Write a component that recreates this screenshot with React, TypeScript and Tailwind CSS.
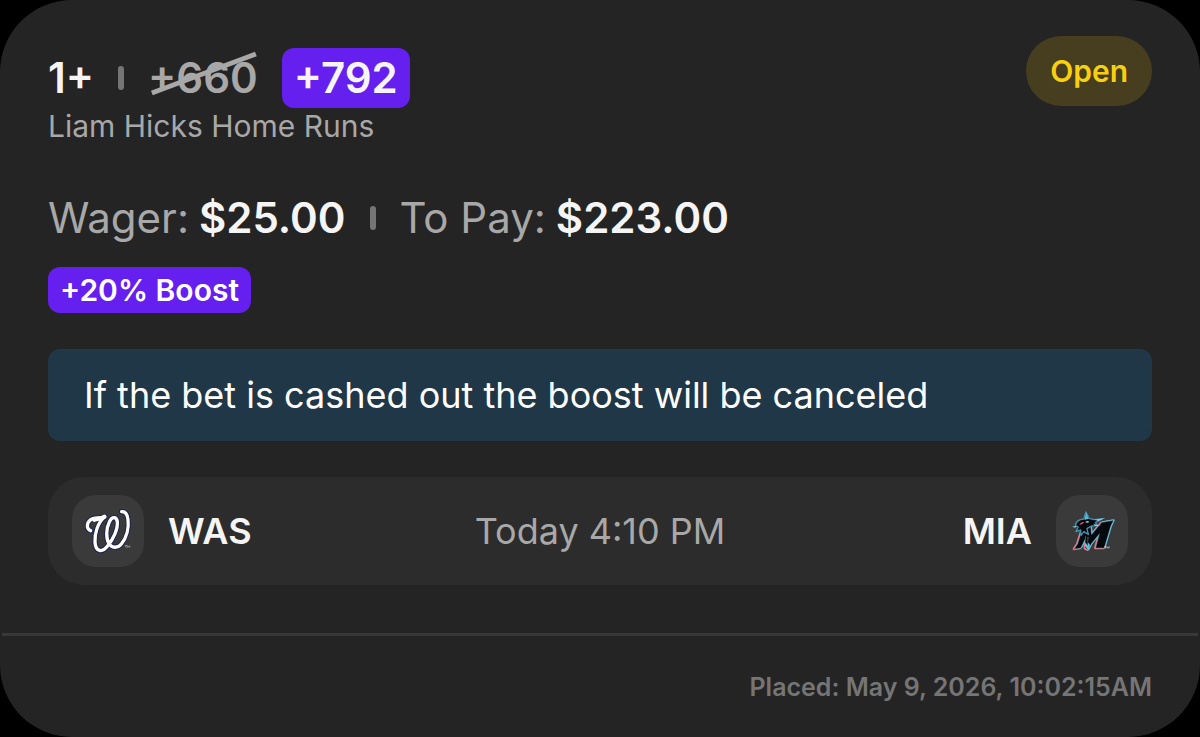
import type { ReactNode } from 'react'

function Separator() {
  return <span className="h-6 w-1.5 rounded-sm bg-[#757575]" />
}

function Amount({ label, value }: { label: string; value: string }) {
  return (
    <div className="flex gap-2.5">
      <span>{label}</span>
      <strong className="font-semibold text-[#f5f5f5]">{value}</strong>
    </div>
  )
}

function LogoTile({ children }: { children: ReactNode }) {
  return (
    <span className="flex size-18 shrink-0 items-center justify-center rounded-3xl bg-[#3a3a3a]">
      {children}
    </span>
  )
}

const NATIONALS_W =
  'M92 137 C77 131 79 108 99 101 C112 97 122 101 134 95 C114 112 103 145 105 171 C107 202 127 203 142 184 C160 163 174 132 172 110 C169 94 156 94 148 111 C138 131 138 160 146 174 C155 191 173 190 184 177 C200 158 207 129 204 104 C202 86 195 79 185 80'

function NationalsLogo() {
  return (
    <svg viewBox="36 30 216 216" className="size-18" role="img" aria-label="Washington">
      <g fill="none" strokeLinecap="round" strokeLinejoin="round">
        <path d={NATIONALS_W} stroke="#1c2350" strokeWidth="16" />
        <path d={NATIONALS_W} stroke="#ffffff" strokeWidth="10" />
        <path d="M103 104 C114 101 123 102 133 95" stroke="#ffffff" strokeWidth="13" />
        <path d="M195 182h6M198 182v5M203 187v-5l3 3 3-3v5" stroke="#aaaaaa" strokeWidth="2" />
      </g>
    </svg>
  )
}

const MARLINS_M =
  'M46 62 L67 62 L70 88 L101 50 L135 44 L127 61 L108 125 L84 125 L96 80 L69 113 L60 130 L53 126 L52 96 L38 125 L20 128 L30 113 Z'
const MARLIN =
  'M22 59 C24 47 34 40 47 39 L54 18 L63 37 L78 41 L104 38 L82 50 L89 59 L70 60 L57 68 L61 86 L48 77 L39 88 L38 72 L24 77 L31 63 Z'

function MarlinsLogo() {
  return (
    <svg viewBox="33 30 216 216" className="size-18" role="img" aria-label="Miami">
      <g transform="translate(69 63)" strokeLinejoin="round">
        <path d={MARLINS_M} fill="none" stroke="#e37a85" strokeWidth="8" transform="translate(-2 1)" />
        <path d={MARLINS_M} fill="none" stroke="#69bfdc" strokeWidth="6" transform="translate(2 -1)" />
        <path d={MARLINS_M} fill="#05090d" stroke="#05090d" strokeWidth="1" />
        <path d={MARLIN} fill="#05090d" stroke="#438fae" strokeWidth="4" />
        <path d="M54 19L49 42L62 38Z" fill="#5cb8d8" />
        <path d="M12 62L26 59L22 65Z M78 41L112 36L91 45Z M76 53L99 60L81 60Z" fill="#83cde4" />
        <path d="M51 91L51 120L62 134L66 117L60 109L61 93Z" fill="#69bfdc" />
        <path d="M53 83L59 87L59 119L52 109Z" fill="#05090d" />
        <path d="M34 57C37 49 43 48 49 48L43 54Z M8 138L20 126L27 130L15 132Z" fill="#dc5365" />
        <path d="M52 47L60 45L64 49L55 50Z" fill="#b9dce7" />
        <path d="M109 122h6M112 122v5M117 127v-5l3 3 3-3v5" fill="none" stroke="#dddddd" strokeWidth="2" />
      </g>
    </svg>
  )
}

export default function App() {
  return (
    <div className="bg-black font-['Inter',sans-serif]">
      <article className="rounded-[72px] bg-[#242424] text-[#f5f5f5]">
        <div className="px-12 pt-9 pb-12">
          <header className="flex items-start justify-between">
            <div className="pt-3">
              <div className="flex items-center gap-6 text-[42px] leading-[60px] font-semibold">
                <span>1+</span>
                <Separator />
                <span className="relative text-[#a8a8a8]">
                  +660
                  <svg viewBox="0 0 108 60" className="absolute inset-0 size-full" aria-hidden="true">
                    <path d="M3 45L107 6" stroke="#a8a8a8" strokeWidth="5" />
                  </svg>
                </span>
                <span className="rounded-xl bg-[#651fef] px-3">+792</span>
              </div>
              <p className="text-[30px] leading-9 text-[#a8a8a8]">Liam Hicks Home Runs</p>
            </div>
            <span className="rounded-full bg-[#463e1f] px-6 text-[30px] leading-[70px] font-semibold text-[#f8d010]">Open</span>
          </header>

          <div className="mt-12 flex items-center gap-6 text-[42px] leading-[51px] text-[#a8a8a8]">
            <Amount label="Wager:" value="$25.00" />
            <Separator />
            <Amount label="To Pay:" value="$223.00" />
          </div>
          <div className="mt-6 flex">
            <span className="rounded-xl bg-[#651fef] px-3 text-[30px] leading-[46px] font-semibold text-white">+20% Boost</span>
          </div>

          <p className="mt-9 rounded-xl bg-[#203747] px-9 text-4xl leading-[92px] text-white">
            If the bet is cashed out the boost will be canceled
          </p>

          <div className="mt-9 grid grid-cols-[1fr_auto_1fr] items-center rounded-[36px] bg-[#2c2c2c] px-6 py-[18px] text-4xl">
            <div className="flex items-center gap-6 font-semibold">
              <LogoTile><NationalsLogo /></LogoTile>
              <span>WAS</span>
            </div>
            <time className="text-[#a8a8a8]">Today 4:10 PM</time>
            <div className="flex items-center justify-end gap-6 font-semibold">
              <span>MIA</span>
              <LogoTile><MarlinsLogo /></LogoTile>
            </div>
          </div>
        </div>

        <footer className="px-0.5">
          <hr className="border-t-[3px] border-[#383838]" />
          <p className="px-[46px] pt-9 pb-[35px] text-right text-[25px] leading-[30px] font-semibold text-[#757575]">
            Placed: May 9, 2026, 10:02:15AM
          </p>
        </footer>
      </article>
    </div>
  )
}
